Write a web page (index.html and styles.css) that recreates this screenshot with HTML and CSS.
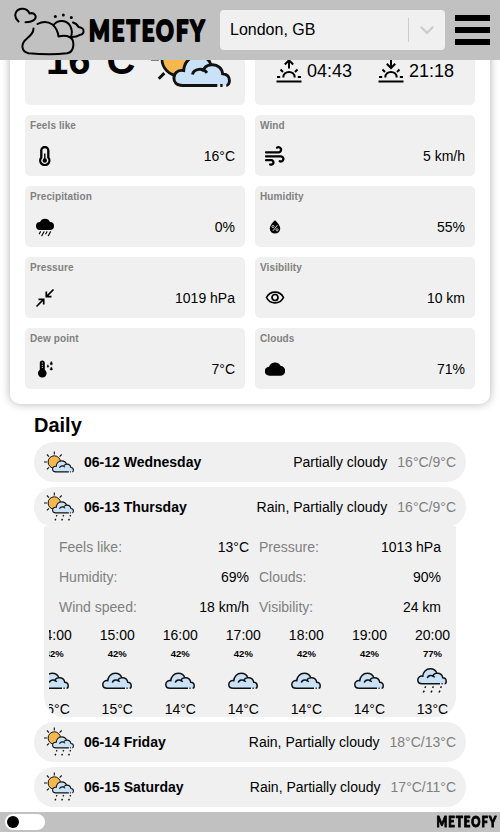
FILE: index.html
```html
<!DOCTYPE html>
<html lang="en">
<head>
<meta charset="utf-8">
<title>Meteofy</title>
<link rel="stylesheet" href="styles.css">
</head>
<body>
<svg class="defs" width="0" height="0">
  <defs>
    <symbol id="cloud-shape" viewBox="0 0 30 17" overflow="visible">
      <path class="cloud-fill" d="M5.2 15.8C2 15.8.8 14 .8 12 .8 9.600 2.800 7.700 5.800 8.200 6 4 9 .8 13.300.8 16.500.8 18.900 2.600 19.800 5.300 23.300 4.900 25.500 7.200 25.700 9.800 28 9.900 29.200 11.500 29.200 13.300 29.200 15 28.300 15.800 27 15.800Z"/>
      <path class="line" d="M23 15.800H5.200C2 15.800.8 14 .8 12 .8 9.600 2.800 7.700 5.800 8.200 6 4 9 .8 13.300.8 16.500.8 18.900 2.600 19.800 5.300 23.300 4.900 25.500 7.200 25.700 9.800 28 9.900 29.200 11.500 29.200 13.300 29.200 15 28.300 15.800 27.600 15.800M24.500 15.800H25.700M19.800 5.300C17.500 5.500 16 6.900 15.700 8.800M10.300 10.200C10.900 7.300 15.800 6.400 17.700 9.400"/>
    </symbol>
    <symbol id="sun-shape" viewBox="0 0 30 30" overflow="visible">
      <circle class="sun-fill" cx="10.300" cy="11" r="6.200"/>
      <path class="line sun-rays" d="M10.300.5V3.500M0 11H3M2.900 3.500 5 5.700M17.700 3.500 15.600 5.700M2.900 18.400 5 16.300M18 11H20.500"/>
    </symbol>
    <symbol id="drops" viewBox="0 0 30 8" overflow="visible">
      <path class="line" d="M8.800.8 7.800 2.300M7.300 5.200 6.300 7M16.500.8 15.500 2.300M15 5.200 14 7M24.500.8 23.500 2.300M23 5.200 22 7"/>
    </symbol>
    <symbol id="cloudy" viewBox="0 0 30 30"><use href="#cloud-shape" x="0" y="6.500" width="30" height="17"/></symbol>
    <symbol id="rain" viewBox="0 0 30 30"><use href="#cloud-shape" x="0" y="2" width="30" height="17"/><use href="#drops" x="0" y="19.500" width="30" height="8"/></symbol>
    <symbol id="partly" viewBox="0 0 30 30"><use href="#sun-shape" x="0" y="4" width="30" height="30"/><use href="#cloud-shape" x="8" y="13.300" width="22" height="12.500"/></symbol>
    <symbol id="sun-rain" viewBox="0 0 30 30"><use href="#sun-shape" x="0" y="0" width="30" height="30"/><use href="#cloud-shape" x="8" y="9.300" width="22" height="12.500"/><use href="#drops" x="5.500" y="22.300" width="26" height="7"/></symbol>
  </defs>
</svg>

<header class="header">
  <svg class="logo" viewBox="0 0 72 50" width="72" height="50">
    <g fill="none" stroke="#000" stroke-width="2" stroke-linecap="round" stroke-linejoin="round">
      <path d="M5.500 15.500C-.5 10 2.500 2.500 10 2.800 13.500 3 15.500 5 16.500 7.500 21 6 24.500 10 21.500 13.500 19 16 16 16.200 12.500 16.200"/>
      <path d="M20.500 22.500C20.500 27 17.500 29.500 14 32.500 7 38 8.500 46 15.500 47.300 28 48.300 45 48.300 54 47.300 62 46 62 33.500 56.500 31 53.500 29.500 49.500 29.500 45.500 30.500 45 26 43.500 22 39.500 18.500 34.500 15 29 15.500 24.500 18"/>
      <path d="M41 18.500C45 13.500 54 13.500 57.500 20.500 59.500 25 59 29 57.500 31.500M60 16.500C63.500 17.500 64.500 19 65.500 21 73 22 71 29 67 28.800 63.500 31 61.500 31 59 31"/>
    </g>
    <circle cx="42.300" cy="10.500" r="1.500"/><circle cx="50.300" cy="9" r="1.500"/><circle cx="58.300" cy="11.500" r="1.500"/>
  </svg>
  <svg class="wordmark" viewBox="0 0 118 26" width="118" height="26"><text transform="translate(1 23.500) scale(.78 1)">METEOFY</text></svg>
  <div class="select">
    <span class="select-value">London, GB</span>
    <span class="select-sep"></span>
    <svg class="chevron" viewBox="0 0 20 20" width="20" height="20"><path d="M4.500 7.500 10 12.800 15.500 7.500" fill="none" stroke="#ccc" stroke-width="2.300" stroke-linecap="round"/></svg>
  </div>
  <div class="burger"><i></i><i></i><i></i></div>
</header>

<main>
  <section class="card">
    <div class="tile hero"><span class="temp">16°C</span><svg class="hero-icon" width="80" height="80"><use href="#partly"/></svg></div>
    <div class="tile suntimes">
      <div class="suntime"><svg class="sun-icon" viewBox="0 0 26 24" width="26" height="24"><path d="M0.500 22.500H25.500M1 18H4.200M21.800 18H25M4.500 10.500 7 13M21.500 10.500 19 13M7.300 18.500C7.300 11 18.700 11 18.700 18.500M13 9.500V2M8.800 5.500 13 1.300 17.200 5.500"/></svg><span>04:43</span></div>
      <div class="suntime"><svg class="sun-icon" viewBox="0 0 26 24" width="26" height="24"><path d="M0.500 22.500H25.500M1 18H4.200M21.800 18H25M4.500 10.500 7 13M21.500 10.500 19 13M7.300 18.500C7.300 11 18.700 11 18.700 18.500M13 0V8M8.800 4.800 13 9 17.200 4.800"/></svg><span>21:18</span></div>
    </div>
    <div class="tile"><h4>Feels like</h4><div class="reading"><svg viewBox="0 0 20 20" width="20" height="20"><path d="M6.300 11.500V4.300A3.500 3.300 0 0 1 13.300 4.300V11.500A4.600 4.600 0 1 1 6.300 11.500Z" fill="none" stroke="#000" stroke-width="2.300"/><circle cx="9.800" cy="14.500" r="2.200"/><path d="M9.800 14V7.500" stroke="#000" stroke-width="1.400"/></svg><span>16°C</span></div></div>
    <div class="tile"><h4>Wind</h4><div class="reading"><svg viewBox="0 0 20 20" width="20" height="20"><path d="M1 6.300H14A2.600 2.600 0 1 0 12 1.600M1 10.300H16A2.600 2.600 0 1 1 14.800 15.300M1 14.200H7A2.300 2.300 0 1 1 5.200 18.500" fill="none" stroke="#000" stroke-width="2.300" stroke-linecap="round"/></svg><span>5 km/h</span></div></div>
    <div class="tile"><h4>Precipitation</h4><div class="reading"><svg viewBox="0 0 20 20" width="20" height="20"><path d="M5 13A4 4 0 0 1 5 5 5.400 5.400 0 0 1 15 5 4 4 0 0 1 15 13Z"/><path d="M5.500 14.800 4.300 16.800M9 14.800 6.800 18.700M12 14.800 10.800 16.800M15.500 14.800 13.300 18.700" stroke="#000" stroke-width="1.200" stroke-linecap="round"/></svg><span>0%</span></div></div>
    <div class="tile"><h4>Humidity</h4><div class="reading"><svg viewBox="0 0 20 20" width="20" height="20"><path d="M10 3.300C12.300 5.500 15.200 8.500 15.200 11.600A5.200 5 0 0 1 4.800 11.600C4.800 8.500 7.700 5.500 10 3.300Z"/><path d="M12.400 8.300 7.800 14" stroke="#f0f0f0" stroke-width=".9"/><circle cx="8" cy="9.500" r="1.100" fill="none" stroke="#f0f0f0" stroke-width=".8"/><circle cx="12.100" cy="12.800" r="1.100" fill="none" stroke="#f0f0f0" stroke-width=".8"/></svg><span>55%</span></div></div>
    <div class="tile"><h4>Pressure</h4><div class="reading"><svg viewBox="0 0 20 20" width="20" height="20"><path d="M1.500 18.500 8.300 11.700M3.500 11.300H8.700V16.500M18.500 1.500 11.700 8.300M11.300 3.500V8.700H16.500" fill="none" stroke="#000" stroke-width="1.700"/></svg><span>1019 hPa</span></div></div>
    <div class="tile"><h4>Visibility</h4><div class="reading"><svg viewBox="0 0 20 20" width="20" height="20"><path d="M1.500 9.500C5 2.300 15 2.300 18.500 9.500 15 16.700 5 16.700 1.500 9.500Z" fill="none" stroke="#000" stroke-width="1.700"/><circle cx="10" cy="9.500" r="3" fill="none" stroke="#000" stroke-width="1.700"/></svg><span>10 km</span></div></div>
    <div class="tile"><h4>Dew point</h4><div class="reading"><svg viewBox="0 0 20 20" width="20" height="20"><path d="M4.800 10.800V4A2.500 2.500 0 0 1 9.800 4V10.800A4.300 4.300 0 1 1 4.800 10.800Z"/><path d="M7.300 3.500V9" stroke="#f0f0f0" stroke-width="1" stroke-dasharray="1 1.300"/><path d="M12.900 5.700Q14.500 8.300 12.900 8.300 11.300 8.300 12.900 5.700ZM16.300 2.500Q18.600 5.800 16.300 5.800 14 5.800 16.300 2.500ZM16.300 7.900Q18.600 11.100 16.300 11.100 14 11.100 16.300 7.900Z" stroke="#000" stroke-width=".5"/></svg><span>7°C</span></div></div>
    <div class="tile"><h4>Clouds</h4><div class="reading"><svg viewBox="0 0 20 20" width="20" height="20"><path d="M4.600 16.700A4.600 4.500 0 0 1 4 7.700 6.300 6.300 0 0 1 15.500 6.800 4.950 4.950 0 0 1 15 16.700Z"/></svg><span>71%</span></div></div>
  </section>

  <section class="daily">
    <h2>Daily</h2>
    <div class="day"><svg width="30" height="30"><use href="#partly"/></svg><b>06-12 Wednesday</b><span>Partially cloudy</span><em>16°C/9°C</em></div>
    <div class="day"><svg width="30" height="30"><use href="#sun-rain"/></svg><b>06-13 Thursday</b><span>Rain, Partially cloudy</span><em>16°C/9°C</em></div>
    <div class="details">
      <dl class="facts">
        <div><dt>Feels like:</dt><dd>13°C</dd></div><div><dt>Pressure:</dt><dd>1013 hPa</dd></div>
        <div><dt>Humidity:</dt><dd>69%</dd></div><div><dt>Clouds:</dt><dd>90%</dd></div>
        <div><dt>Wind speed:</dt><dd>18 km/h</dd></div><div><dt>Visibility:</dt><dd>24 km</dd></div>
      </dl>
      <div class="hours">
        <div class="hour"><span>14:00</span><b>42%</b><svg width="30" height="30"><use href="#cloudy"/></svg><span>16°C</span></div>
        <div class="hour"><span>15:00</span><b>42%</b><svg width="30" height="30"><use href="#cloudy"/></svg><span>15°C</span></div>
        <div class="hour"><span>16:00</span><b>42%</b><svg width="30" height="30"><use href="#cloudy"/></svg><span>14°C</span></div>
        <div class="hour"><span>17:00</span><b>42%</b><svg width="30" height="30"><use href="#cloudy"/></svg><span>14°C</span></div>
        <div class="hour"><span>18:00</span><b>42%</b><svg width="30" height="30"><use href="#cloudy"/></svg><span>14°C</span></div>
        <div class="hour"><span>19:00</span><b>42%</b><svg width="30" height="30"><use href="#cloudy"/></svg><span>14°C</span></div>
        <div class="hour"><span>20:00</span><b>77%</b><svg width="30" height="30"><use href="#rain"/></svg><span>13°C</span></div>
      </div>
    </div>
    <div class="day"><svg width="30" height="30"><use href="#sun-rain"/></svg><b>06-14 Friday</b><span>Rain, Partially cloudy</span><em>18°C/13°C</em></div>
    <div class="day"><svg width="30" height="30"><use href="#sun-rain"/></svg><b>06-15 Saturday</b><span>Rain, Partially cloudy</span><em>17°C/11°C</em></div>
  </section>
</main>

<footer class="footer">
  <div class="toggle"><i></i></div>
  <svg class="wordmark" viewBox="0 0 118 26" width="61" height="14"><text transform="translate(1 23.500) scale(.78 1)">METEOFY</text></svg>
</footer>
</body>
</html>
```
FILE: styles.css
```css
* { box-sizing: border-box; }
html, body { height: 832px; overflow: hidden; }
body {
  margin: 0;
  background: #fff;
  color: #000;
  font-family: "Liberation Sans", Arial, sans-serif;
  font-size: 14px;
}
svg { display: block; flex: none; }
.defs { position: absolute; }
h2, h4, dl, dd { margin: 0; }

.cloud-fill { fill: #c9e2f7; }
.sun-fill { fill: #f7b74f; stroke: #111; stroke-width: 1; }
.line { fill: none; stroke: #111; stroke-width: 1.5; }
.sun-rays { stroke-width: 1.1; }

.header {
  position: fixed;
  z-index: 2;
  top: 0;
  left: 0;
  right: 0;
  height: 60px;
  display: flex;
  align-items: center;
  padding: 0 10px 0 13px;
  background: #c1c1c1;
}
.logo { margin-top: 1px; }
.wordmark { margin-left: 3px; overflow: visible; }
.wordmark text {
  font: 900 28px Lato, sans-serif;
  letter-spacing: 2.7px;
  stroke: #000;
  stroke-width: 2;
  stroke-linejoin: round;
}
.select {
  display: flex;
  align-items: center;
  width: 225px;
  height: 40px;
  margin-left: 14px;
  padding: 0 8px 0 10px;
  border-radius: 4px;
  background: #f0f0f0;
  font-size: 16px;
}
.select-value { flex: 1; }
.select-sep { width: 1px; height: 24px; background: #ccc; margin-right: 8px; }
.burger { display: flex; flex-direction: column; gap: 6px; width: 35px; margin-left: 10px; }
.burger i { height: 6px; background: #000; }

.card {
  display: grid;
  grid-template-columns: 220px 220px;
  grid-template-rows: 92px;
  grid-auto-rows: 61px;
  gap: 10px;
  margin: -2px 10px 0;
  padding: 15px;
  border-radius: 10px;
  box-shadow: 0 0 10px rgba(0, 0, 0, .3);
}
.tile { padding: 5px; border-radius: 5px; background: #f0f0f0; }
.tile h4 { font-size: 10px; line-height: 11px; letter-spacing: .1px; color: gray; }
.reading { display: flex; align-items: center; justify-content: space-between; height: 30px; margin-top: 10px; padding: 0 5px 0 5px; }
.hero { display: flex; align-items: center; justify-content: space-between; padding: 0 14px 0 21px; }
.temp { padding-top: 3px; font-size: 40px; font-weight: bold; }
.suntimes { display: flex; justify-content: space-between; padding: 46px 21px 0 21px; font-size: 18px; }
.suntime { display: flex; align-items: center; gap: 5px; height: 24px; }
.sun-icon { fill: none; stroke: #000; stroke-width: 2; }

.daily { padding: 10px 34px 0; }
.daily h2 { height: 28px; font-size: 20px; line-height: 23px; }
.day {
  display: flex;
  align-items: center;
  height: 40px;
  margin-bottom: 5px;
  padding: 0 10px;
  border-radius: 20px;
  background: #f0f0f0;
}
.day b { flex: 1; margin-left: 10px; }
.day em { margin-left: 10px; color: gray; font-style: normal; }
.details {
  height: 191px;
  margin: -6px 10px 5px;
  padding: 6px 5px 0;
  border-radius: 0 0 20px 20px;
  background: #f0f0f0;
  overflow: hidden;
}
.facts { display: grid; grid-template-columns: 190px 182px; column-gap: 10px; padding-left: 10px; }
.facts div { display: flex; align-items: center; justify-content: space-between; height: 30px; }
.facts dt { color: gray; }
.hours { display: flex; justify-content: flex-end; overflow: hidden; padding-right: 1px; }
.hour {
  flex: 0 0 35px;
  margin-left: 28px;
  display: flex;
  flex-direction: column;
  align-items: center;
  line-height: 16px;
}
.hour span:first-child { padding-top: 5px; }
.hour b { margin-top: 3px; font-size: 9.500px; }
.hour svg { margin: 4px 0 5px; }

.footer {
  position: fixed;
  left: 0;
  right: 0;
  bottom: 0;
  height: 20px;
  display: flex;
  align-items: center;
  justify-content: space-between;
  padding: 0 3px 0 5px;
  background: #c1c1c1;
}
.toggle { display: flex; align-items: center; width: 40px; height: 16px; padding: 0 2px; border-radius: 8px; background: #fff; }
.toggle i { width: 12px; height: 12px; border-radius: 50%; background: #000; }
```
